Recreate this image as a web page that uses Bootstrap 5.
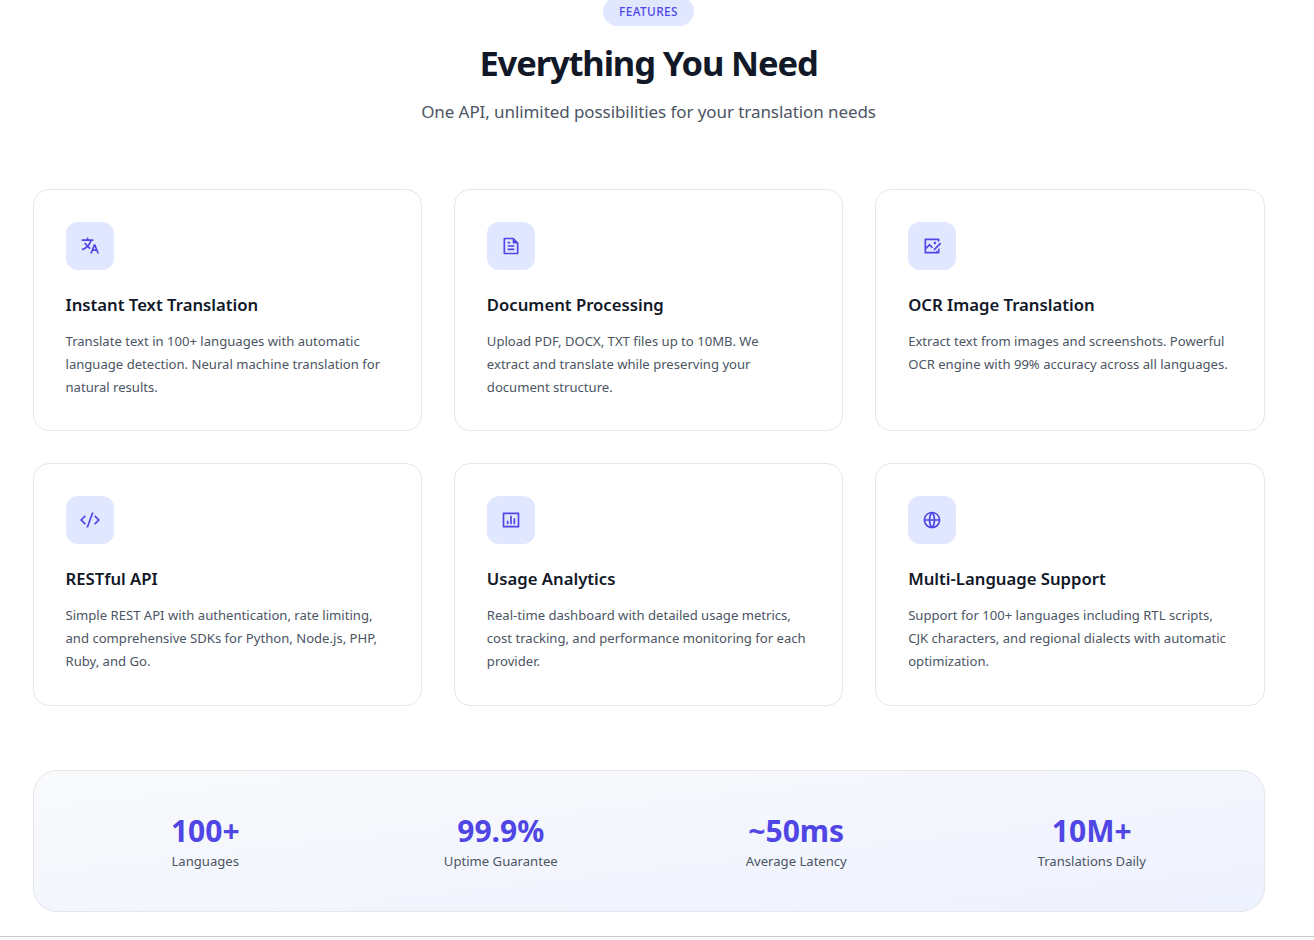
<!DOCTYPE html>
<html lang="en">

<head>
  <meta charset="UTF-8">
  <meta name="viewport" content="width=device-width, initial-scale=1.0">
  <title>Features</title>
  <link href="https://cdn.jsdelivr.net/npm/bootstrap@5.3.0/dist/css/bootstrap.min.css" rel="stylesheet">
  <style>
    html, body { height: 940px; overflow: hidden; }
    body { font-family: "Noto Sans", "Liberation Sans", sans-serif; background: #fff; padding-right: 17px; }
    .page-wrap { width: 1232px; margin: -3px auto 0; }
    .feat-pill { background: #e0e7ff; color: #4f46e5; font-size: 11.8px; font-weight: 500; letter-spacing: .4px; line-height: 17px; padding: 6px 16px; border-radius: 999px; }
    .feat-title { font-size: 34.5px; font-weight: 700; line-height: 44px; color: #111827; letter-spacing: -1.12px; margin: 15px 0 13px; }
    .feat-sub { font-size: 17px; line-height: 28px; color: #4b5563; letter-spacing: -.08px; margin-bottom: 62.6px; }
    .feat-grid { display: grid; grid-template-columns: repeat(3, 1fr); gap: 32px; }
    .feat-card { border: 1px solid #e5e7eb; border-radius: 16px; padding: 32px 32px 31.55px; background: #fff; }
    .feat-icon { width: 48px; height: 48px; border-radius: 12px; background: #e0e7ff; color: #4f46e5; }
    .feat-icon svg { width: 20px; height: 20px; fill: currentColor; }
    .feat-card h3 { font-size: 16.7px; font-weight: 600; line-height: 27px; color: #111827; margin: 21px 0 11.95px; }
    .feat-card p { font-size: 13.1px; line-height: 23.04px; color: #4b5563; margin: 0; }
    .stat-box { margin-top: 64px; height: 142px; border: 1px solid #e5e7eb; border-radius: 24px; padding: 2px 24px 0; background: linear-gradient(to bottom right, #f9fafb, #eef2ff); }
    .stat-num { font-size: 30px; font-weight: 700; line-height: 36px; color: #4f46e5; }
    .stat-lbl { font-size: 13.1px; line-height: 20px; color: #4b5563; margin-top: 2px; }
    .bottom-rule { position: fixed; left: 0; right: 0; top: 936px; bottom: 0; border-top: 1px solid #ccc; background: #fafafa; }
  </style>
</head>

<body>
  <div class="page-wrap">
    <!-- Header -->
    <div class="text-center">
      <span class="feat-pill d-inline-block">FEATURES</span>
      <h2 class="feat-title">Everything You Need</h2>
      <p class="feat-sub">One API, unlimited possibilities for your translation needs</p>
    </div>

    <!-- Feature cards -->
    <div class="feat-grid">
      <div class="feat-card">
        <div class="feat-icon d-flex align-items-center justify-content-center">
          <svg viewBox="0 0 24 24"><path d="M18.5 10l4.4 11h-2.155l-1.201-3h-4.09l-1.199 3h-2.154L16.5 10h2zM10 2v2h6v2h-1.968a18.222 18.222 0 0 1-3.62 6.301 14.864 14.864 0 0 0 2.336 1.707l-.751 1.878A17.015 17.015 0 0 1 9 13.725a16.676 16.676 0 0 1-6.201 3.548l-.536-1.929a14.7 14.7 0 0 0 5.327-3.042A18.078 18.078 0 0 1 4.767 8h2.24A16.032 16.032 0 0 0 9 10.877a16.165 16.165 0 0 0 2.91-4.876L2 6V4h6V2h2zm7.5 10.885L16.253 16h2.492L17.5 12.885z"/></svg>
        </div>
        <h3>Instant Text Translation</h3>
        <p>Translate text in 100+ languages with automatic language detection. Neural machine translation for natural results.</p>
      </div>
      <div class="feat-card">
        <div class="feat-icon d-flex align-items-center justify-content-center">
          <svg viewBox="0 0 24 24"><path d="M21 8v12.993A1 1 0 0 1 20.007 22H3.993A.993.993 0 0 1 3 21.008V2.992C3 2.455 3.449 2 4.002 2h10.995L21 8zm-2 1h-5V4H5v16h14V9zM8 7h3v2H8V7zm0 4h8v2H8v-2zm0 4h8v2H8v-2z"/></svg>
        </div>
        <h3>Document Processing</h3>
        <p>Upload PDF, DOCX, TXT files up to 10MB. We<br>extract and translate while preserving your document structure.</p>
      </div>
      <div class="feat-card">
        <div class="feat-icon d-flex align-items-center justify-content-center">
          <svg viewBox="0 0 24 24"><path d="M20 3c.552 0 1 .448 1 1v1.757l-2 2V5H5v8.1l4-4 4.328 4.329-1.415 1.413L9 11.93l-4 3.999V19h10.533l.708.001 1.329-1.33L18.9 19h.1v-2.758l2-2V20c0 .552-.448 1-1 1H4c-.55 0-1-.45-1-1V4c0-.552.448-1 1-1h16zm1.778 4.808l1.414 1.414L15.414 17l-1.416-.002.002-1.412 7.778-7.778zM15.5 7c.828 0 1.5.672 1.5 1.5s-.672 1.5-1.5 1.5S14 9.328 14 8.5 14.672 7 15.5 7z"/></svg>
        </div>
        <h3>OCR Image Translation</h3>
        <p>Extract text from images and screenshots. Powerful OCR engine with 99% accuracy across all languages.</p>
      </div>
      <div class="feat-card">
        <div class="feat-icon d-flex align-items-center justify-content-center">
          <svg viewBox="0 0 24 24"><path d="M24 12l-5.657 5.657-1.414-1.414L21.172 12l-4.243-4.243 1.414-1.414L24 12zM2.828 12l4.243 4.243-1.414 1.414L0 12l5.657-5.657L7.07 7.757 2.828 12zm6.96 9H7.66l6.552-18h2.128L9.788 21z"/></svg>
        </div>
        <h3>RESTful API</h3>
        <p>Simple REST API with authentication, rate limiting, and comprehensive SDKs for Python, Node.js, PHP, Ruby, and Go.</p>
      </div>
      <div class="feat-card">
        <div class="feat-icon d-flex align-items-center justify-content-center">
          <svg viewBox="0 0 24 24"><path d="M3 3h18a1 1 0 0 1 1 1v16a1 1 0 0 1-1 1H3a1 1 0 0 1-1-1V4a1 1 0 0 1 1-1zm1 2v14h16V5H4zm3 8h2v4H7v-4zm4-6h2v10h-2V7zm4 3h2v7h-2v-7z"/></svg>
        </div>
        <h3>Usage Analytics</h3>
        <p>Real-time dashboard with detailed usage metrics, cost tracking, and performance monitoring for each provider.</p>
      </div>
      <div class="feat-card">
        <div class="feat-icon d-flex align-items-center justify-content-center">
          <svg viewBox="0 0 24 24"><path d="M12 22C6.477 22 2 17.523 2 12S6.477 2 12 2s10 4.477 10 10-4.477 10-10 10zm-2.29-2.333A17.9 17.9 0 0 1 8.027 13H4.062a8.008 8.008 0 0 0 5.648 6.667zM10.03 13c.151 2.439.848 4.73 1.97 6.752A15.905 15.905 0 0 0 13.97 13h-3.94zm9.908 0h-3.965a17.9 17.9 0 0 1-1.683 6.667A8.008 8.008 0 0 0 19.938 13zM4.062 11h3.965A17.9 17.9 0 0 1 9.71 4.333 8.008 8.008 0 0 0 4.062 11zm5.969 0h3.938A15.905 15.905 0 0 0 12 4.248 15.905 15.905 0 0 0 10.03 11zm4.259-6.667A17.9 17.9 0 0 1 15.973 11h3.965a8.008 8.008 0 0 0-5.648-6.667z"/></svg>
        </div>
        <h3>Multi-Language Support</h3>
        <p>Support for 100+ languages including RTL scripts, CJK characters, and regional dialects with automatic optimization.</p>
      </div>
    </div>

    <!-- Stats -->
    <div class="stat-box row g-0 align-items-center text-center">
      <div class="col-3"><div class="stat-num">100+</div><div class="stat-lbl">Languages</div></div>
      <div class="col-3"><div class="stat-num">99.9%</div><div class="stat-lbl">Uptime Guarantee</div></div>
      <div class="col-3"><div class="stat-num">~50ms</div><div class="stat-lbl">Average Latency</div></div>
      <div class="col-3"><div class="stat-num">10M+</div><div class="stat-lbl">Translations Daily</div></div>
    </div>
  </div>
  <div class="bottom-rule"></div>
</body>

</html>
